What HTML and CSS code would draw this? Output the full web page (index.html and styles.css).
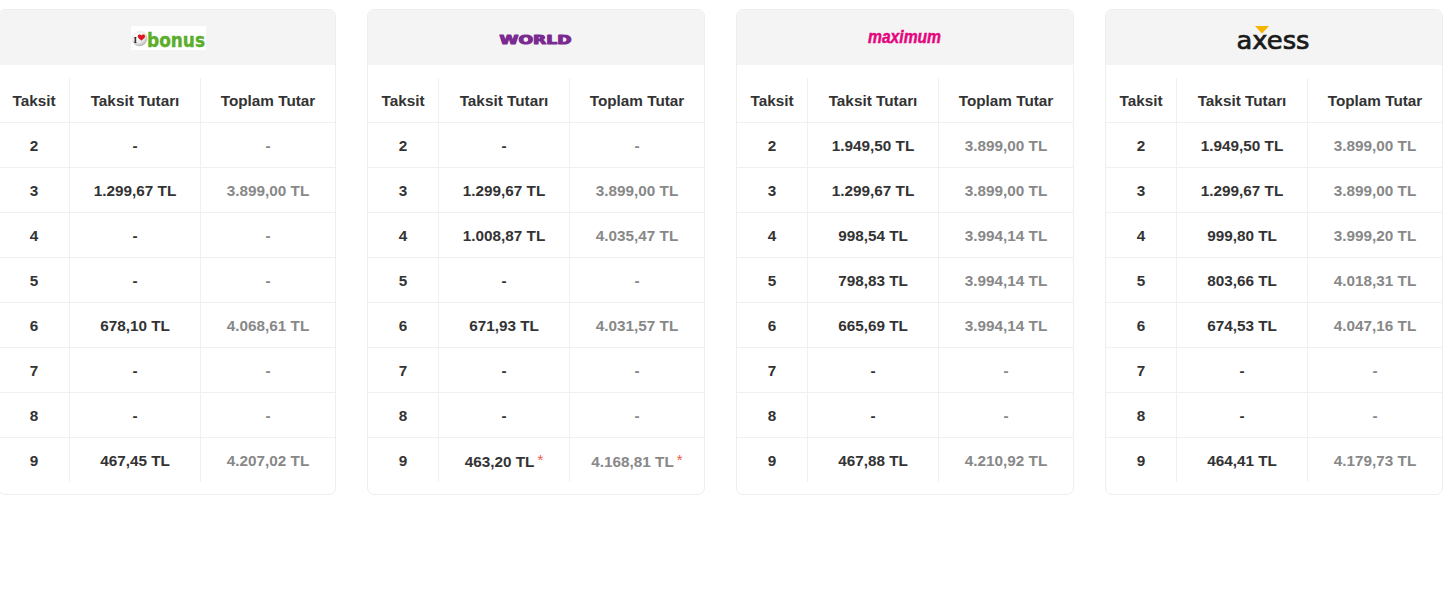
FILE: index.html
```html
<!DOCTYPE html>
<html lang="tr">
<head>
<meta charset="utf-8">
<title>Taksit Seçenekleri</title>
<link rel="stylesheet" href="styles.css">
</head>
<body>
<div class="cards">

  <div class="card">
    <div class="card-head">
      <svg class="logo logo-bonus" width="75" height="24" viewBox="0 0 75 24" aria-label="bonus">
        <defs>
          <radialGradient id="ball" cx="40%" cy="35%" r="65%">
            <stop offset="0" stop-color="#ffffff"/>
            <stop offset="0.6" stop-color="#efefef"/>
            <stop offset="1" stop-color="#b8b8b8"/>
          </radialGradient>
        </defs>
        <rect x="0" y="0" width="75" height="24" fill="#ffffff"/>
        <circle cx="8.5" cy="12.5" r="7.8" fill="url(#ball)"/>
        <text x="2.6" y="16.5" class="b-i">I</text>
        <path d="M10.4 9.4c0.9-1.6 3.7-1.3 3.7 0.9c0 1.6-2.1 2.9-3.7 4.4c-1.6-1.5-3.7-2.8-3.7-4.4c0-2.2 2.8-2.5 3.7-0.9z" fill="#e0141e"/>
        <text x="16" y="20.5" class="b-txt" textLength="58" lengthAdjust="spacingAndGlyphs">bonus</text>
      </svg>
    </div>
    <table class="tbl">
      <thead><tr><th>Taksit</th><th>Taksit Tutarı</th><th>Toplam Tutar</th></tr></thead>
      <tbody>
        <tr><td>2</td><td>-</td><td class="tot">-</td></tr>
        <tr><td>3</td><td>1.299,67 TL</td><td class="tot">3.899,00 TL</td></tr>
        <tr><td>4</td><td>-</td><td class="tot">-</td></tr>
        <tr><td>5</td><td>-</td><td class="tot">-</td></tr>
        <tr><td>6</td><td>678,10 TL</td><td class="tot">4.068,61 TL</td></tr>
        <tr><td>7</td><td>-</td><td class="tot">-</td></tr>
        <tr><td>8</td><td>-</td><td class="tot">-</td></tr>
        <tr><td>9</td><td>467,45 TL</td><td class="tot">4.207,02 TL</td></tr>
      </tbody>
    </table>
  </div>

  <div class="card">
    <div class="card-head">
      <svg class="logo logo-world" width="74" height="12" viewBox="0 0 74 12" aria-label="World">
        <text x="0.5" y="10.5" class="w-txt" textLength="72" lengthAdjust="spacingAndGlyphs">WORLD</text>
      </svg>
    </div>
    <table class="tbl">
      <thead><tr><th>Taksit</th><th>Taksit Tutarı</th><th>Toplam Tutar</th></tr></thead>
      <tbody>
        <tr><td>2</td><td>-</td><td class="tot">-</td></tr>
        <tr><td>3</td><td>1.299,67 TL</td><td class="tot">3.899,00 TL</td></tr>
        <tr><td>4</td><td>1.008,87 TL</td><td class="tot">4.035,47 TL</td></tr>
        <tr><td>5</td><td>-</td><td class="tot">-</td></tr>
        <tr><td>6</td><td>671,93 TL</td><td class="tot">4.031,57 TL</td></tr>
        <tr><td>7</td><td>-</td><td class="tot">-</td></tr>
        <tr><td>8</td><td>-</td><td class="tot">-</td></tr>
        <tr><td>9</td><td>463,20 TL<span class="star">*</span></td><td class="tot">4.168,81 TL<span class="star">*</span></td></tr>
      </tbody>
    </table>
  </div>

  <div class="card">
    <div class="card-head">
      <svg class="logo logo-max" width="76" height="18" viewBox="0 0 76 18" aria-label="maximum">
        <text x="1" y="12.5" class="m-txt" textLength="73" lengthAdjust="spacingAndGlyphs">maximum</text>
      </svg>
    </div>
    <table class="tbl">
      <thead><tr><th>Taksit</th><th>Taksit Tutarı</th><th>Toplam Tutar</th></tr></thead>
      <tbody>
        <tr><td>2</td><td>1.949,50 TL</td><td class="tot">3.899,00 TL</td></tr>
        <tr><td>3</td><td>1.299,67 TL</td><td class="tot">3.899,00 TL</td></tr>
        <tr><td>4</td><td>998,54 TL</td><td class="tot">3.994,14 TL</td></tr>
        <tr><td>5</td><td>798,83 TL</td><td class="tot">3.994,14 TL</td></tr>
        <tr><td>6</td><td>665,69 TL</td><td class="tot">3.994,14 TL</td></tr>
        <tr><td>7</td><td>-</td><td class="tot">-</td></tr>
        <tr><td>8</td><td>-</td><td class="tot">-</td></tr>
        <tr><td>9</td><td>467,88 TL</td><td class="tot">4.210,92 TL</td></tr>
      </tbody>
    </table>
  </div>

  <div class="card">
    <div class="card-head">
      <svg class="logo logo-axess" width="76" height="24" viewBox="0 0 76 24" aria-label="axess">
        <text x="0.5" y="22.5" class="a-txt" textLength="73" lengthAdjust="spacingAndGlyphs">axess</text>
        <polygon points="19,0 33,0 26,7.5" fill="#f5b400"/>
      </svg>
    </div>
    <table class="tbl">
      <thead><tr><th>Taksit</th><th>Taksit Tutarı</th><th>Toplam Tutar</th></tr></thead>
      <tbody>
        <tr><td>2</td><td>1.949,50 TL</td><td class="tot">3.899,00 TL</td></tr>
        <tr><td>3</td><td>1.299,67 TL</td><td class="tot">3.899,00 TL</td></tr>
        <tr><td>4</td><td>999,80 TL</td><td class="tot">3.999,20 TL</td></tr>
        <tr><td>5</td><td>803,66 TL</td><td class="tot">4.018,31 TL</td></tr>
        <tr><td>6</td><td>674,53 TL</td><td class="tot">4.047,16 TL</td></tr>
        <tr><td>7</td><td>-</td><td class="tot">-</td></tr>
        <tr><td>8</td><td>-</td><td class="tot">-</td></tr>
        <tr><td>9</td><td>464,41 TL</td><td class="tot">4.179,73 TL</td></tr>
      </tbody>
    </table>
  </div>

</div>
</body>
</html>
```

FILE: styles.css
```css
html, body {
  margin: 0;
  padding: 0;
  background: #ffffff;
}

body {
  font-family: "Liberation Sans", Arial, sans-serif;
  color: #333333;
  padding-top: 9px;
}

.cards {
  display: grid;
  grid-template-columns: repeat(4, 338px);
  column-gap: 31px;
  margin-left: -2px;
  align-items: start;
}

.card {
  border: 1px solid #eeeeee;
  border-radius: 7px;
  overflow: hidden;
  background: #ffffff;
  padding-bottom: 12px;
}

.card-head {
  height: 55px;
  background: #f4f4f4;
  display: flex;
  align-items: center;
  justify-content: center;
}

.logo {
  display: block;
  overflow: visible;
}

.logo-bonus { margin-top: 1px; margin-left: 2px; }
.logo-world { margin-top: 2px; }
.logo-max { margin-top: 3px; }
.logo-axess { margin-top: 1px; }

.b-i {
  font-family: "Liberation Serif", serif;
  font-weight: bold;
  font-size: 9px;
  fill: #222222;
}

.b-txt {
  font-family: "DejaVu Sans", sans-serif;
  font-weight: bold;
  font-size: 19px;
  fill: #5aae2b;
  stroke: #5aae2b;
  stroke-width: 0.4px;
}

.w-txt {
  font-family: "DejaVu Sans", sans-serif;
  font-weight: bold;
  font-size: 12.5px;
  fill: #7a2a90;
  stroke: #7a2a90;
  stroke-width: 1.1px;
  stroke-linejoin: round;
}

.m-txt {
  font-family: "Liberation Sans", sans-serif;
  font-weight: bold;
  font-style: italic;
  font-size: 19px;
  fill: #e4067f;
  stroke: #e4067f;
  stroke-width: 0.5px;
}

.a-txt {
  font-family: "DejaVu Sans", sans-serif;
  font-weight: normal;
  font-size: 25px;
  fill: #1a1a1a;
  stroke: #1a1a1a;
  stroke-width: 0.7px;
}

.tbl {
  width: 100%;
  margin-top: 13px;
  border-collapse: collapse;
  table-layout: fixed;
}

.tbl th,
.tbl td {
  text-align: center;
  vertical-align: middle;
  font-size: 15.3px;
  font-weight: bold;
  color: #333333;
  padding: 1px 0 0;
}

.tbl th {
  height: 43px;
}

.tbl td {
  height: 43px;
  border-top: 1px solid #f0f0f0;
}

.tbl th + th,
.tbl td + td {
  border-left: 1px solid #f0f0f0;
}

.tbl th:nth-child(1) { width: 70px; }
.tbl th:nth-child(2) { width: 130px; }

.tbl td.tot {
  color: #888888;
}

.star {
  color: #ef5a3c;
  font-size: 15px;
  font-weight: normal;
  vertical-align: 2px;
  margin-left: 3px;
}
```
